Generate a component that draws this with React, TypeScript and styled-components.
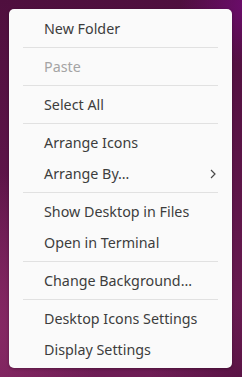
import React from "react";
import styled, { createGlobalStyle } from "styled-components";

const Global = createGlobalStyle`
  html, body { margin: 0; padding: 0; }
  body { width: 242px; height: 377px; overflow: hidden; }
`;

const Desktop = styled.div`
  width: 242px;
  height: 377px;
  box-sizing: border-box;
  padding: 9px 10px 9px 9px;
  background:
    radial-gradient(ellipse 70px 60px at 250px 5px, #6d0c6e 0%, rgba(109,12,110,0) 100%),
    radial-gradient(ellipse 120px 160px at -20px 330px, #8a2a66 0%, rgba(138,42,102,0) 100%),
    radial-gradient(ellipse 90px 80px at 240px 380px, #5a1345 0%, rgba(90,19,69,0) 100%),
    linear-gradient(180deg, #4f0f3e 0%, #5e1549 50%, #6e1d55 100%);
`;

const Menu = styled.div`
  width: 223px;
  height: 359px;
  box-sizing: border-box;
  padding: 4px 0 3px;
  background: #fafafa;
  border-radius: 5px;
  box-shadow: 0 1px 3px rgba(0, 0, 0, 0.3);
  display: flex;
  flex-direction: column;
  font-family: "Noto Sans", "Open Sans", sans-serif;
  font-size: 14.3px;
`;

const Item = styled.div<{ $disabled?: boolean }>`
  height: 31px;
  display: flex;
  align-items: center;
  justify-content: space-between;
  padding: 0 16px 0 35px;
  color: ${(p) => (p.$disabled ? "#a4a4a4" : "#3d3d3d")};
  white-space: nowrap;
`;

const Separator = styled.div`
  height: 1px;
  margin: 3px 14px;
  background: #e1e1e1;
`;

const Chevron = () => (
  <svg width="6" height="10" viewBox="0 0 6 10">
    <path d="M1 1 L5 5 L1 9" fill="none" stroke="#4a4a4a" strokeWidth="1.2" />
  </svg>
);

export default function App() {
  return (
    <>
      <Global />
      <Desktop>
        <Menu>
          <Item>New Folder</Item>
          <Separator />
          <Item $disabled>Paste</Item>
          <Separator />
          <Item>Select All</Item>
          <Separator />
          <Item>Arrange Icons</Item>
          <Item>
            Arrange By…
            <Chevron />
          </Item>
          <Separator />
          <Item>Show Desktop in Files</Item>
          <Item>Open in Terminal</Item>
          <Separator />
          <Item>Change Background…</Item>
          <Separator />
          <Item>Desktop Icons Settings</Item>
          <Item>Display Settings</Item>
        </Menu>
      </Desktop>
    </>
  );
}
